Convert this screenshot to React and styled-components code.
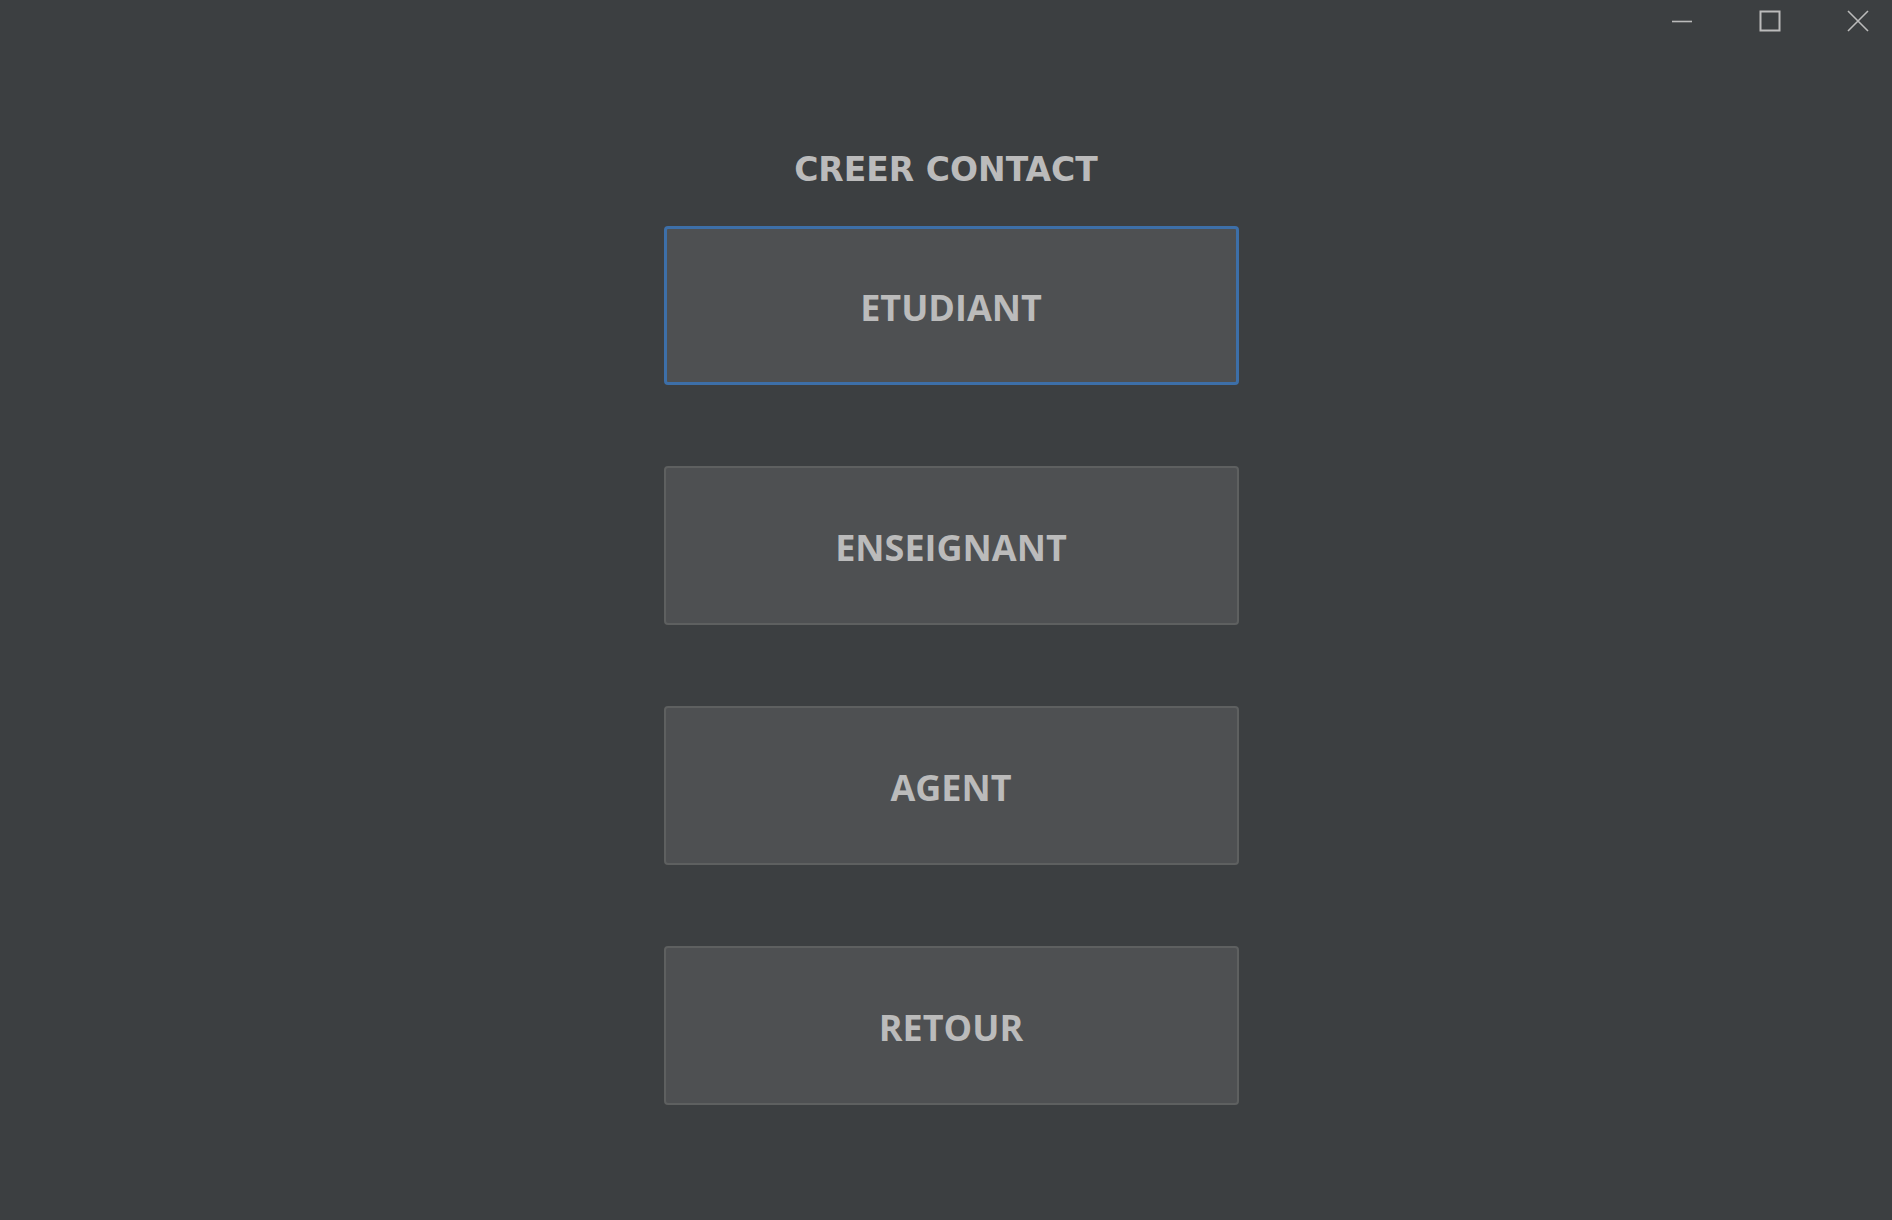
import React from 'react';
import styled, { createGlobalStyle } from 'styled-components';

const colors = {
  bg: '#3c3f41',
  button: '#4e5052',
  border: '#5e6060',
  focus: '#3d6fa8',
  text: '#bbbbbb',
};

const GlobalStyle = createGlobalStyle`
  html, body {
    margin: 0;
    padding: 0;
    background: ${colors.bg};
  }
`;

const Window = styled.div`
  width: 1892px;
  height: 1220px;
  background: ${colors.bg};
  display: flex;
  flex-direction: column;
  overflow: hidden;
`;

const TitleBar = styled.div`
  height: 44px;
  display: flex;
  justify-content: flex-end;
  gap: 20px;
`;

const WindowButton = styled.div`
  width: 68px;
  height: 42px;
  display: flex;
  align-items: center;
  justify-content: center;
  color: ${colors.text};
`;

const Content = styled.div`
  display: flex;
  flex-direction: column;
  align-items: center;
  padding-left: 10px;
`;

const Title = styled.h1`
  margin: 104px 0 0 -10px;
  font-family: 'DejaVu Sans', Verdana, sans-serif;
  font-weight: bold;
  font-size: 33px;
  line-height: 44px;
  color: ${colors.text};
`;

const Menu = styled.div`
  margin-top: 34px;
  display: flex;
  flex-direction: column;
  gap: 81px;
`;

const MenuButton = styled.button`
  width: 575px;
  height: 159px;
  box-sizing: border-box;
  background: ${colors.button};
  border: ${(p) => (p.$focused ? `3px solid ${colors.focus}` : `2px solid ${colors.border}`)};
  border-radius: 4px;
  color: ${colors.text};
  font-family: 'Open Sans', 'Noto Sans', sans-serif;
  font-weight: 700;
  font-size: 36px;
  display: flex;
  align-items: center;
  justify-content: center;
  padding: 4px 0 0;
  cursor: pointer;
  outline: none;
`;

const Minimize = () => (
  <svg width="22" height="22" viewBox="0 0 22 22">
    <line x1="1" y1="11.5" x2="21" y2="11.5" stroke="currentColor" strokeWidth="1.6" />
  </svg>
);

const Maximize = () => (
  <svg width="22" height="22" viewBox="0 0 22 22">
    <rect x="1.5" y="1.5" width="19" height="19" fill="none" stroke="currentColor" strokeWidth="2" />
  </svg>
);

const Close = () => (
  <svg width="24" height="24" viewBox="0 0 24 24">
    <path d="M2 2 L22 22 M22 2 L2 22" stroke="currentColor" strokeWidth="1.6" fill="none" />
  </svg>
);

const choices = ['ETUDIANT', 'ENSEIGNANT', 'AGENT', 'RETOUR'];

export default function App() {
  return (
    <Window>
      <GlobalStyle />
      <TitleBar>
        <WindowButton><Minimize /></WindowButton>
        <WindowButton><Maximize /></WindowButton>
        <WindowButton><Close /></WindowButton>
      </TitleBar>
      <Content>
        <Title>CREER CONTACT</Title>
        <Menu>
          {choices.map((label, i) => (
            <MenuButton key={label} $focused={i === 0}>
              {label}
            </MenuButton>
          ))}
        </Menu>
      </Content>
    </Window>
  );
}
